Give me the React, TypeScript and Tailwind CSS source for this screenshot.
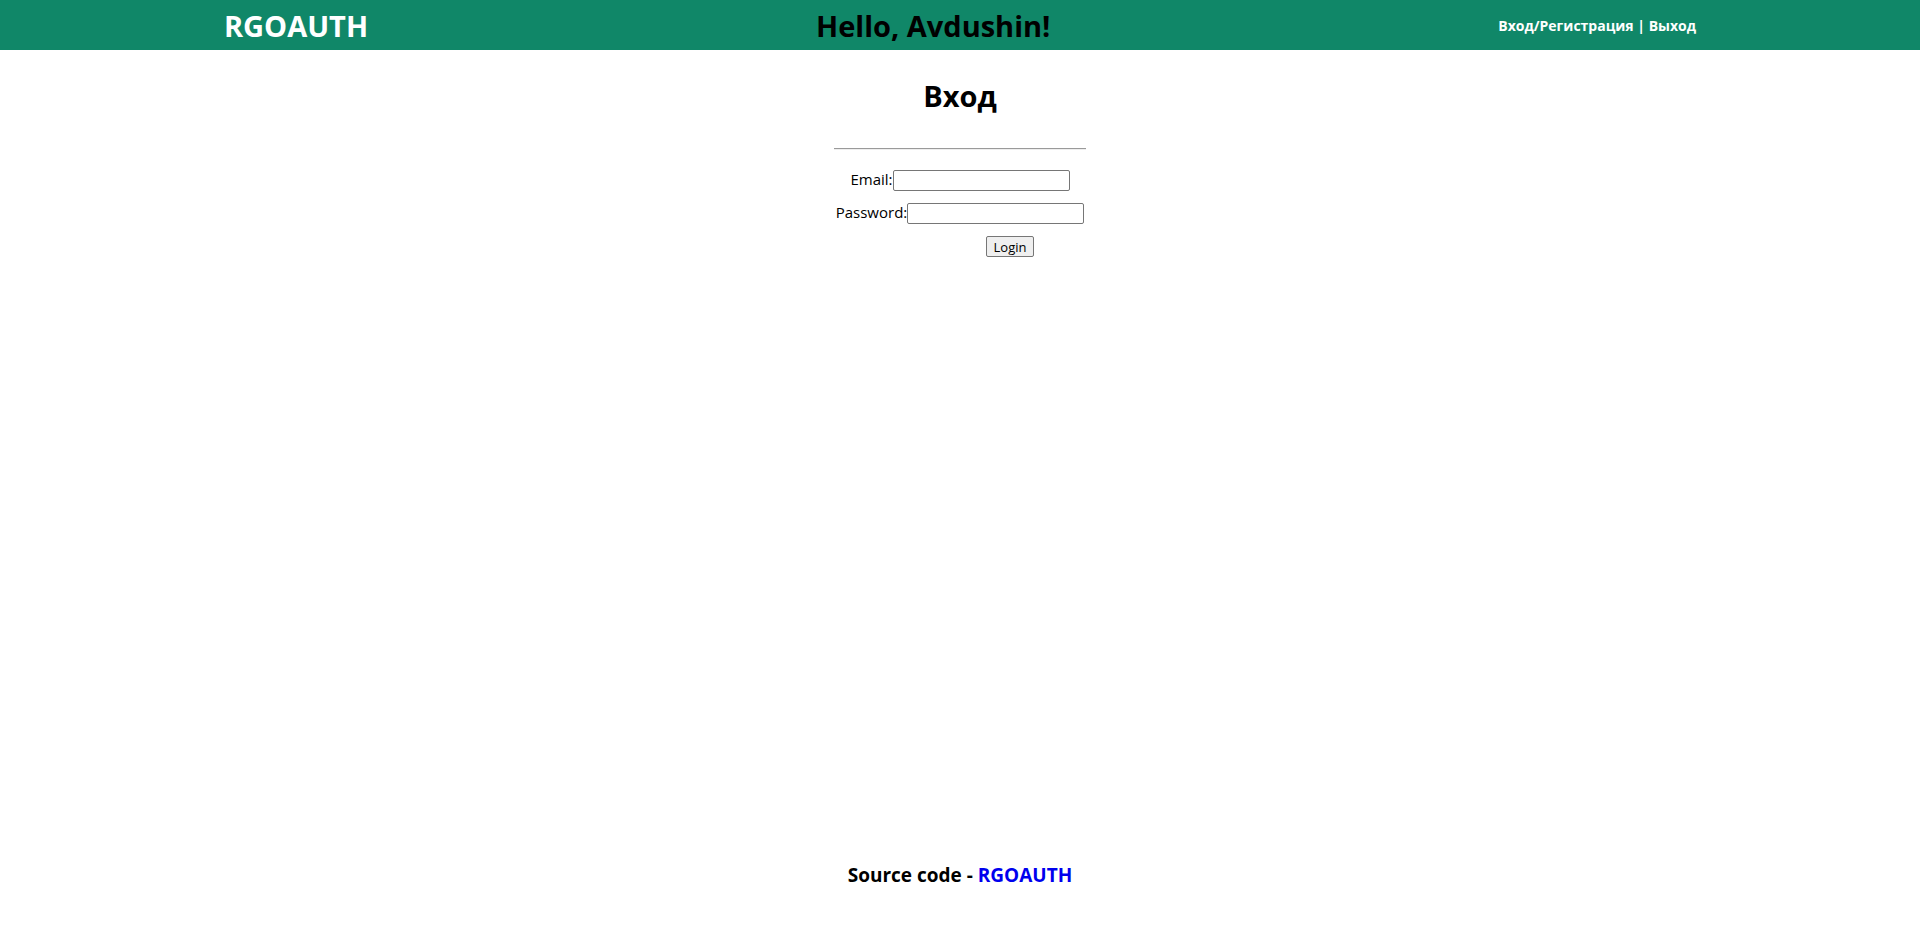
const fieldClass =
  'h-[21px] w-[177px] rounded-[2px] border border-[#767676] bg-white px-px text-[13px]';

function Header() {
  return (
    <header className="flex h-[50px] items-center justify-around bg-[#108768] pt-0.5">
      <a href="#home" className="text-[29px] leading-10 font-bold text-white">
        RGOAUTH
      </a>
      <h1 className="text-[29px] leading-10 font-bold">Hello, Avdushin!</h1>
      <nav className="text-sm leading-5 font-bold text-white">
        <a href="#login">Вход/Регистрация</a> | <a href="#logout">Выход</a>
      </nav>
    </header>
  );
}

function LoginForm() {
  return (
    <form className="mt-8 flex flex-col items-center" onSubmit={(e) => e.preventDefault()}>
      <hr className="mb-5 h-0.5 w-[252px] border-t border-b border-t-[#9a9a9a] border-b-[#eeeeee]" />
      <div className="flex flex-col items-center gap-3">
        <div className="flex h-[21px] items-start">
          <label htmlFor="email" className="text-[15px] leading-[18px]">
            Email:
          </label>
          <input id="email" type="email" className={fieldClass} />
        </div>
        <div className="flex h-[21px] items-start">
          <label htmlFor="password" className="text-[15px] leading-[18px]">
            Password:
          </label>
          <input id="password" type="password" className={fieldClass} />
        </div>
        <button
          type="submit"
          className="ml-[100px] h-[21px] w-12 rounded-[2px] border border-[#767676] bg-[#efefef] text-[13px] leading-4"
        >
          Login
        </button>
      </div>
    </form>
  );
}

export default function App() {
  return (
    <div className="flex min-h-screen flex-col bg-white font-['Open_Sans','Noto_Sans',sans-serif] text-black">
      <Header />
      <main className="flex grow flex-col items-center pt-[26px]">
        <h2 className="text-[29px] leading-10 font-bold">Вход</h2>
        <LoginForm />
      </main>
      <footer className="pb-12 text-center text-[19px] leading-6 font-bold">
        Source code -{' '}
        <a href="#source" className="text-[#0000ee]">
          RGOAUTH
        </a>
      </footer>
    </div>
  );
}
